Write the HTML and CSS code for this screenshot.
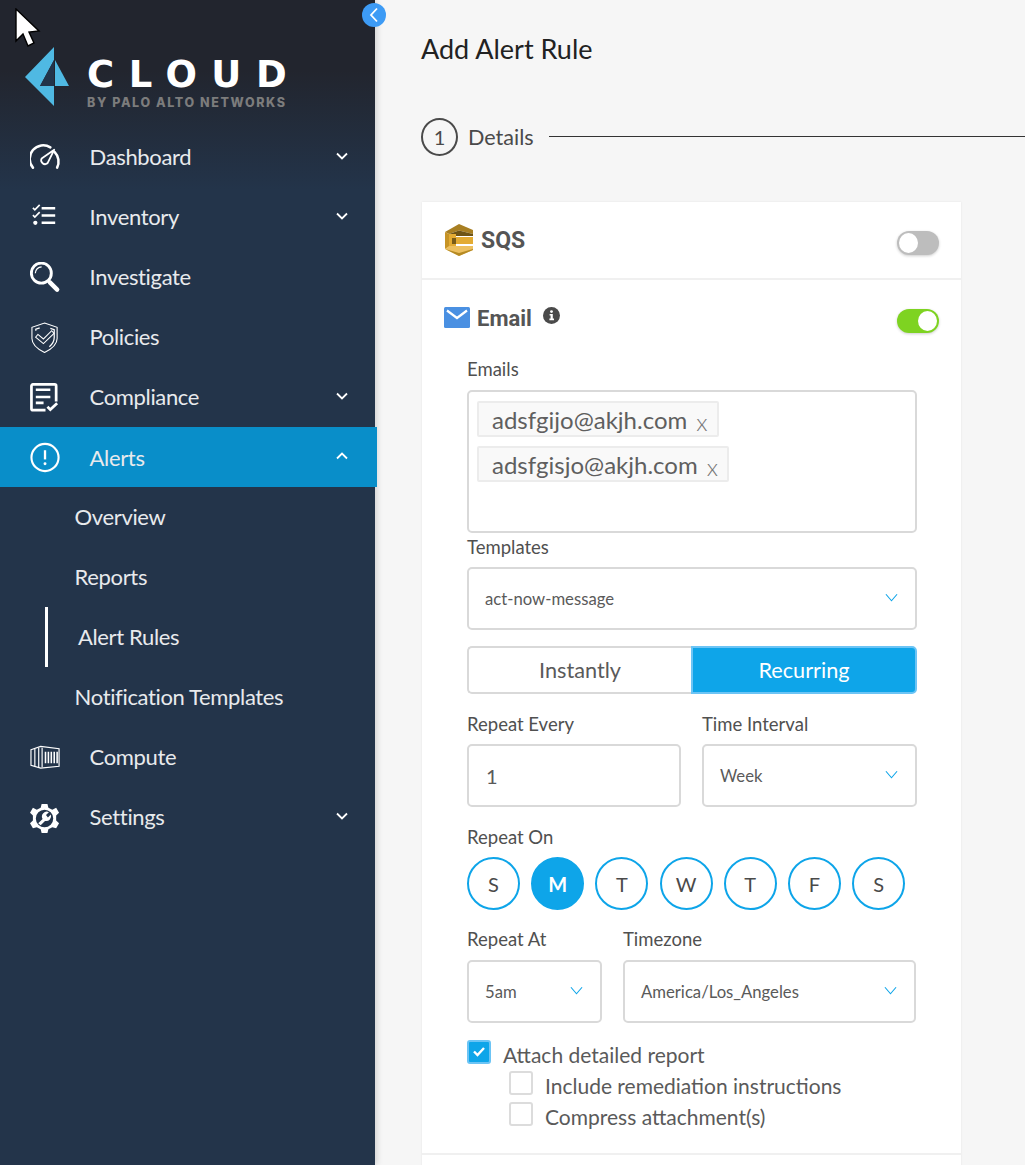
FILE: index.html
```html
<!DOCTYPE html>
<html lang="en">
<head>
  <meta charset="UTF-8">
  <meta name="viewport" content="width=device-width, initial-scale=1.0">
  <title>Add Alert Rule</title>
  <link rel="stylesheet" href="styles.css">
</head>
<body>
  <svg class="cursor" width="26" height="40" viewBox="0 0 26 40">
    <path d="M1 1 L1 33 L8 26 L13 38 L19 35 L14 24 L24 23 Z" fill="#fff" stroke="#000" stroke-width="1.4"/>
  </svg>

  <aside class="sidebar">
    <button class="collapse">
      <svg width="10" height="16" viewBox="0 0 10 16"><path d="M8 1.5 L2 8 L8 14.5" fill="none" stroke="#fff" stroke-width="1.8"/></svg>
    </button>

    <div class="logo">
      <svg class="logo-mark" width="46" height="62" viewBox="0 0 46 62">
        <path fill-rule="evenodd" d="M29 1 L0 31 L29 60 Z M29 14 L15 40 L29 40 Z" fill="#4fb9e3"/>
        <path d="M30 14 L44 40 L30 40 Z" fill="#4fb9e3"/>
        <path d="M29 14 L15 40 L29 40 Z" fill="#22344a"/>
      </svg>
      <div class="logo-text">
        <div class="logo-name">CLOUD</div>
        <div class="logo-sub">BY PALO ALTO NETWORKS</div>
      </div>
    </div>

    <nav class="nav">
      <a class="nav-row">
        <svg class="nav-icon" viewBox="0 0 32 32" fill="none" stroke="#fff" stroke-width="2.6" stroke-linecap="round">
          <path d="M3 26.5 A14 14 0 0 1 21 5.5"/>
          <path d="M25.5 10.5 A14 14 0 0 1 28 26.5"/>
          <path d="M25 8 L18 22 A4 4 0 0 1 12 17 Z" stroke-width="1.8" stroke-linejoin="round"/>
        </svg>
        <span class="nav-label">Dashboard</span>
        <svg class="chev" viewBox="0 0 12 8"><path d="M1 1.5 L6 6.5 L11 1.5"/></svg>
      </a>
      <a class="nav-row">
        <svg class="nav-icon" viewBox="0 0 32 32" fill="none" stroke="#fff" stroke-width="2.6">
          <path d="M3 6 L5 8 L10 3" stroke-width="1.7"/><path d="M3 13.5 L5 15.5 L10 10.5" stroke-width="1.7"/>
          <circle cx="5.5" cy="21.5" r="2.2" fill="#fff" stroke="none"/>
          <path d="M12 6.5 H26 M12 14 H26 M12 21.5 H26"/>
        </svg>
        <span class="nav-label">Inventory</span>
        <svg class="chev" viewBox="0 0 12 8"><path d="M1 1.5 L6 6.5 L11 1.5"/></svg>
      </a>
      <a class="nav-row">
        <svg class="nav-icon" viewBox="0 0 32 32" fill="none" stroke="#fff">
          <circle cx="11.7" cy="11.5" r="10.3" stroke-width="3"/>
          <path d="M5.5 11.5 A6.5 6.5 0 0 1 12 5" stroke-width="1.3"/>
          <path d="M20.5 21 L28 28.5" stroke-width="4.6" stroke-linecap="round"/>
        </svg>
        <span class="nav-label">Investigate</span>
      </a>
      <a class="nav-row">
        <svg class="nav-icon" viewBox="0 0 32 32" fill="none" stroke="#fff" stroke-width="1.1">
          <path d="M15 1 L28 5.5 V17 C28 23 21 28.5 15 31.5 C9 28.5 2 23 2 17 V5.5 Z"/>
          <path d="M6 9 V7.5 L10 6 M21 6.5 L25 8 V16 C25 20 23 23 20 25.5" stroke-width="1.3"/>
          <path d="M7 15 L13 20 L22 11 L24.5 14 L13 25 L4.5 18 Z" transform="translate(1.5 -1.5) scale(0.95)"/>
        </svg>
        <span class="nav-label">Policies</span>
      </a>
      <a class="nav-row">
        <svg class="nav-icon" viewBox="0 0 32 32" fill="none" stroke="#fff" stroke-width="2.8">
          <path d="M16 29 H3 a1.5 1.5 0 0 1 -1.5 -1.5 V4 A1.5 1.5 0 0 1 3 2.5 H25.5 A1.5 1.5 0 0 1 27 4 V20"/>
          <path d="M6 8 H21 M6 15.5 H21 M6 21.5 H14"/>
          <path d="M18 25.5 L21 28.5 L28 22"/>
        </svg>
        <span class="nav-label">Compliance</span>
        <svg class="chev" viewBox="0 0 12 8"><path d="M1 1.5 L6 6.5 L11 1.5"/></svg>
      </a>
      <a class="nav-row active">
        <svg class="nav-icon" viewBox="0 0 32 32" fill="none" stroke="#fff" stroke-width="2.2">
          <circle cx="15.5" cy="16" r="14"/>
          <path d="M15.5 8.5 V18" stroke-width="2.4"/>
          <circle cx="15.5" cy="22.5" r="1.5" fill="#fff" stroke="none"/>
        </svg>
        <span class="nav-label">Alerts</span>
        <svg class="chev" viewBox="0 0 12 8"><path d="M1 6.5 L6 1.5 L11 6.5"/></svg>
      </a>
      <a class="sub-row"><span class="sub-label">Overview</span></a>
      <a class="sub-row"><span class="sub-label">Reports</span></a>
      <a class="sub-row current"><span class="sub-label">Alert Rules</span></a>
      <a class="sub-row"><span class="sub-label">Notification Templates</span></a>
      <a class="nav-row">
        <svg class="nav-icon" viewBox="0 0 32 32" fill="none" stroke="#fff" stroke-width="1.2">
          <path d="M1 8 L11 4.5 L30 7 V25 L11 27 L1 24 Z"/>
          <path d="M5 7 V25 M9 6 V26 M12.5 6 V26" stroke-width="1.2"/>
          <path d="M16 10 V22 M19 10 V22 M22 10 V22 M25 10 V22 M28 10 V22" stroke-width="1.6"/>
        </svg>
        <span class="nav-label">Compute</span>
      </a>
      <a class="nav-row">
        <svg class="nav-icon" viewBox="0 -1 32 32">
          <path fill="#fff" fill-rule="evenodd" d="M12 1 H18 L19 5 L23 7 L27 5 L30 10 L27 13 V18 L30 21 L27 26 L23 25 L19 27 L18 31 H12 L11 27 L7 25 L3 26 L0 21 L3 18 V13 L0 10 L3 5 L7 7 L11 5 Z M15 7 A9 9 0 1 0 15 25 A9 9 0 1 0 15 7 Z"/>
          <path d="M8.5 21 L13 16.5 A5 5 0 0 1 19.5 9.5 L16.5 12.5 L18.5 15 L21.5 12 A5 5 0 0 1 15.5 18.5 L11 23 Z" fill="#fff"/>
        </svg>
        <span class="nav-label">Settings</span>
        <svg class="chev" viewBox="0 0 12 8"><path d="M1 1.5 L6 6.5 L11 1.5"/></svg>
      </a>
    </nav>
  </aside>

  <main class="main">
    <h1 class="title">Add Alert Rule</h1>

    <div class="step">
      <span class="step-num">1</span>
      <span class="step-name">Details</span>
      <span class="step-line"></span>
    </div>

    <section class="card">
      <div class="channel channel-sqs">
        <div class="channel-head">
          <svg class="sqs-icon" width="30" height="32" viewBox="0 0 30 32">
            <path d="M1 8 L15 0 L29 6 V10 L15 6.5 L5 10 Z" fill="#a87f22"/>
            <path d="M5 10 L15 6.5 L29 10 V12 H12 V10 Z" fill="#6e5415"/>
            <path d="M12 13 H29 V20 H12 Z" fill="#e3ab33"/>
            <path d="M1 8 L5 10 V23 L1 25 Z" fill="#c79426"/>
            <path d="M5 10 H12 V23 H5 Z" fill="#e3ab33"/>
            <path d="M8 14 H12 V20 H8 Z" fill="#7a5c18"/>
            <path d="M5 22 H29 V26 L15 32 L1 25 Z" fill="#edc060"/>
            <path d="M1 25 L15 29 L29 25 V26 L15 32 Z" fill="#b58a24"/>
          </svg>
          <span class="channel-name sqs-name">SQS</span>
          <span class="toggle"></span>
        </div>
      </div>

      <div class="channel">
        <div class="channel-head email-head">
          <svg class="mail-icon" width="26" height="22" viewBox="0 0 26 22">
            <rect width="26" height="21" rx="1.5" fill="#4a90e2"/>
            <path d="M3 3.5 L13 11 L23 3.5" fill="none" stroke="#fff" stroke-width="2.2"/>
          </svg>
          <span class="channel-name">Email</span>
          <svg class="info" width="17" height="17" viewBox="0 0 17 17">
            <circle cx="8.5" cy="8.5" r="8.5" fill="#4a4a4a"/>
            <circle cx="8.5" cy="4.6" r="1.4" fill="#fff"/>
            <path d="M6.6 7 H9.8 V11.6 H11 V13.2 H6.4 V11.6 H7.6 V8.6 H6.6 Z" fill="#fff"/>
          </svg>
          <span class="toggle on"></span>
        </div>

        <div class="form">
          <label class="field-label">Emails</label>
          <div class="tag-box">
            <span class="tag">adsfgijo@akjh.com<i class="tag-x">x</i></span>
            <span class="tag">adsfgisjo@akjh.com<i class="tag-x">x</i></span>
          </div>

          <label class="field-label templates-label">Templates</label>
          <div class="select">
            <span>act-now-message</span>
            <svg class="select-chev" viewBox="0 0 14 9"><path d="M1 1 L7 8 L13 1"/></svg>
          </div>

          <div class="switch">
            <span class="switch-opt">Instantly</span>
            <span class="switch-opt selected">Recurring</span>
          </div>

          <div class="form-row repeat-row">
            <div class="col col-repeat">
              <label class="field-label">Repeat Every</label>
              <div class="input">1</div>
            </div>
            <div class="col col-interval">
              <label class="field-label">Time Interval</label>
              <div class="select">
                <span>Week</span>
                <svg class="select-chev" viewBox="0 0 14 9"><path d="M1 1 L7 8 L13 1"/></svg>
              </div>
            </div>
          </div>

          <label class="field-label repeat-on">Repeat On</label>
          <div class="days">
            <span class="day">S</span>
            <span class="day selected">M</span>
            <span class="day">T</span>
            <span class="day">W</span>
            <span class="day">T</span>
            <span class="day">F</span>
            <span class="day">S</span>
          </div>

          <div class="form-row at-row">
            <div class="col col-at">
              <label class="field-label">Repeat At</label>
              <div class="select">
                <span>5am</span>
                <svg class="select-chev" viewBox="0 0 14 9"><path d="M1 1 L7 8 L13 1"/></svg>
              </div>
            </div>
            <div class="col col-zone">
              <label class="field-label">Timezone</label>
              <div class="select">
                <span>America/Los_Angeles</span>
                <svg class="select-chev" viewBox="0 0 14 9"><path d="M1 1 L7 8 L13 1"/></svg>
              </div>
            </div>
          </div>

          <div class="check-row">
            <span class="check checked">
              <svg width="14" height="11" viewBox="0 0 14 11"><path d="M2 5.5 L5.5 9 L12 2" fill="none" stroke="#fff" stroke-width="2.4"/></svg>
            </span>
            <span>Attach detailed report</span>
          </div>
          <div class="check-row nested">
            <span class="check"></span>
            <span>Include remediation instructions</span>
          </div>
          <div class="check-row nested">
            <span class="check"></span>
            <span>Compress attachment(s)</span>
          </div>
        </div>
      </div>
      <div class="channel-end"></div>
    </section>
  </main>
</body>
</html>
```

FILE: styles.css
```css
* {
  box-sizing: border-box;
}
html, body {
  height: 100%;
}
body {
  margin: 0;
  height: 1165px;
  overflow: hidden;
  display: flex;
  background-color: #f6f6f6;
  font-family: Lato, "Open Sans", sans-serif;
  color: #4a4a4a;
}

.cursor {
  position: absolute;
  top: 8px;
  left: 15px;
  z-index: 10;
}

/* sidebar */
.sidebar {
  position: relative;
  width: 375px;
  flex-shrink: 0;
  background: linear-gradient(#22252e 0, #22252e 70px, #23344a 190px);
  box-shadow: 2px 0 6px rgba(0, 0, 0, 0.15);
}
.collapse {
  position: absolute;
  top: 3px;
  right: -11px;
  width: 24px;
  height: 24px;
  padding: 0;
  border: 0;
  border-radius: 50%;
  background-color: #3d9bf5;
  display: flex;
  align-items: center;
  justify-content: center;
  z-index: 3;
}
.logo {
  height: 127px;
  padding: 46px 0 0 25px;
  display: flex;
  align-items: flex-start;
  gap: 16px;
}
.logo-text {
  padding-top: 13px;
  width: 201px;
}
.logo-name {
  font-family: "DejaVu Sans", sans-serif;
  font-weight: 700;
  font-size: 37px;
  line-height: 32px;
  letter-spacing: 14.5px;
  color: #fff;
  white-space: nowrap;
}
.logo-sub {
  margin-top: 6px;
  font-family: Inter, sans-serif;
  font-weight: 800;
  font-size: 12.5px;
  line-height: 12px;
  letter-spacing: 1.6px;
  color: #7c7c7c;
  white-space: nowrap;
}
.nav-row, .sub-row {
  display: flex;
  align-items: center;
  height: 60px;
  color: #e8eaed;
  font-size: 22px;
  letter-spacing: -0.35px;
}
.nav-row {
  padding-left: 30px;
}
.nav-icon {
  width: 31px;
  height: 31px;
  flex-shrink: 0;
}
.nav-label {
  margin: -2px 0 0 28.6px;
  flex: 1;
}
.sub-label {
  margin-top: -2px;
}
.chev {
  width: 12px;
  height: 8px;
  margin-right: 27px;
  margin-top: -2px;
  fill: none;
  stroke: #fff;
  stroke-width: 1.8;
}
.nav-row.active {
  width: 377px;
  background-color: #098ec9;
  position: relative;
  z-index: 2;
}
.nav-row.active .nav-label {
  margin-top: 0;
}
.nav-row.active .chev {
  margin-right: 29px;
}
.sub-row {
  padding-left: 74.6px;
  position: relative;
}
.sub-row.current {
  padding-left: 78px;
}
.sub-row.current::before {
  content: "";
  position: absolute;
  left: 45px;
  top: 0;
  width: 3px;
  height: 60px;
  background-color: #fff;
}

/* main */
.main {
  flex: 1;
  padding-left: 46px;
  min-width: 0;
}
.title {
  margin: 0;
  padding-top: 33px;
  font-size: 27px;
  line-height: 32px;
  font-weight: 400;
  color: #222;
}
.step {
  display: flex;
  align-items: center;
  margin-top: 53px;
  height: 38px;
}
.step-num {
  width: 37px;
  height: 38px;
  border: 2px solid #4a4a4a;
  border-radius: 50%;
  display: flex;
  align-items: center;
  justify-content: center;
  font-size: 20px;
}
.step-name {
  margin: 0 0 0 10px;
  font-size: 21.6px;
}
.step-line {
  flex: 1;
  height: 1px;
  margin: -2px 0 0 15px;
  background-color: #333;
}
.card {
  margin: 46px 0 0 1px;
  width: 539px;
  padding-bottom: 30px;
  background-color: #fff;
  box-shadow: 0 0 2px rgba(0, 0, 0, 0.08);
}
.channel-sqs {
  height: 78px;
  border-bottom: 2px solid #f0f0f0;
}
.channel-head {
  display: flex;
  align-items: center;
  padding: 22px 22px 0 22px;
}
.channel-name {
  font-family: Roboto, sans-serif;
  font-weight: 700;
  font-size: 22px;
  color: #555;
}
.sqs-name {
  font-size: 23px;
  margin-top: 1px;
}
.sqs-icon {
  margin-right: 7px;
}
.toggle {
  position: relative;
  width: 42px;
  height: 24px;
  margin-left: auto;
  margin-top: 5px;
  border-radius: 12px;
  background-color: #bdbdbd;
  box-shadow: 0 1px 3px rgba(0, 0, 0, 0.2);
}
.toggle::after {
  content: "";
  position: absolute;
  left: 2px;
  top: 2px;
  width: 19px;
  height: 20px;
  border-radius: 50%;
  background-color: #fff;
}
.toggle.on {
  background-color: #7ed321;
}
.toggle.on::after {
  left: auto;
  right: 2px;
}
.email-head {
  padding-top: 27px;
  align-items: flex-start;
}
.mail-icon {
  margin-right: 7px;
}
.email-head .channel-name {
  line-height: 22px;
  margin-top: 1px;
}
.email-head .toggle {
  margin-top: 2px;
}
.info {
  margin: 0 0 0 11px;
}
.form {
  padding: 25px 44px 0 45px;
}
.field-label {
  display: block;
  font-size: 18.5px;
  line-height: 22px;
  color: #505050;
}
.tag-box {
  margin-top: 10px;
  height: 143px;
  padding: 9px 8px;
  border: 2px solid #d9d9d9;
  border-radius: 5px;
  display: flex;
  flex-direction: column;
  align-items: flex-start;
  gap: 9px;
}
.tag {
  height: 36px;
  padding: 0 9px 0 13px;
  background-color: #f9f9f9;
  border: 2px solid #ececec;
  border-radius: 2px;
  font-size: 24px;
  line-height: 34px;
  color: #5f5f5f;
  white-space: nowrap;
}
.tag-x {
  font-style: normal;
  font-size: 24px;
  font-weight: 300;
  color: #777;
  margin-left: 9px;
  position: relative;
  top: 2px;
}
.templates-label {
  margin: 3px 0 -1px;
}
.select, .input {
  height: 63px;
  margin-top: 10px;
  border: 2px solid #d9d9d9;
  border-radius: 5px;
  display: flex;
  align-items: center;
  justify-content: space-between;
  padding: 0 17px 0 16px;
  font-size: 16.7px;
  color: #5a5a5a;
  background-color: #fff;
}
.input {
  font-size: 20px;
  padding-left: 17px;
}
.repeat-row .select, .repeat-row .input {
  margin-top: 9px;
}
.select-chev {
  width: 13px;
  height: 9px;
  fill: none;
  stroke: #0ea5e9;
  stroke-width: 1.2;
  margin-top: -3px;
}
.switch {
  display: flex;
  height: 48px;
  margin-top: 16px;
}
.switch-opt {
  width: 224px;
  display: flex;
  align-items: center;
  justify-content: center;
  font-size: 21.7px;
  color: #5a5a5a;
  border: 2px solid #d9d9d9;
  border-right: 0;
  border-radius: 5px 0 0 5px;
}
.switch-opt.selected {
  width: 226px;
  background-color: #0ea5e9;
  border: 2px solid #6cc4f5;
  border-radius: 0 5px 5px 0;
  color: #fff;
}
.form-row {
  display: flex;
  justify-content: space-between;
  margin-top: 19px;
}
.col-repeat {
  width: 214px;
}
.col-interval {
  width: 215px;
}
.col-at {
  width: 135px;
}
.col-zone {
  width: 293px;
  margin-right: 1px;
}
.repeat-on {
  margin-top: 19px;
}
.days {
  display: flex;
  gap: 11.2px;
  margin-top: 9px;
}
.day {
  width: 53px;
  height: 53px;
  border: 2px solid #0ea5e9;
  border-radius: 50%;
  display: flex;
  align-items: center;
  justify-content: center;
  font-size: 20px;
}
.day.selected {
  background-color: #0ea5e9;
  color: #fff;
  font-weight: 700;
}
.at-row {
  margin-top: 18px;
}
.check-row {
  display: flex;
  align-items: center;
  gap: 12px;
  font-size: 21px;
  color: #5a5a5a;
  height: 31px;
}
.form-row + .check-row {
  margin-top: 16px;
}
.check-row.nested {
  padding-left: 42px;
}
.check {
  width: 24px;
  height: 24px;
  border: 2px solid #dcdcdc;
  border-radius: 3px;
  display: flex;
  align-items: center;
  justify-content: center;
  margin-top: -6px;
}
.check.checked {
  background-color: #0ea5e9;
  border-color: #6cc4f5;
}
.channel-end {
  height: 2px;
  margin-top: 21px;
  background-color: #f0f0f0;
}
```
